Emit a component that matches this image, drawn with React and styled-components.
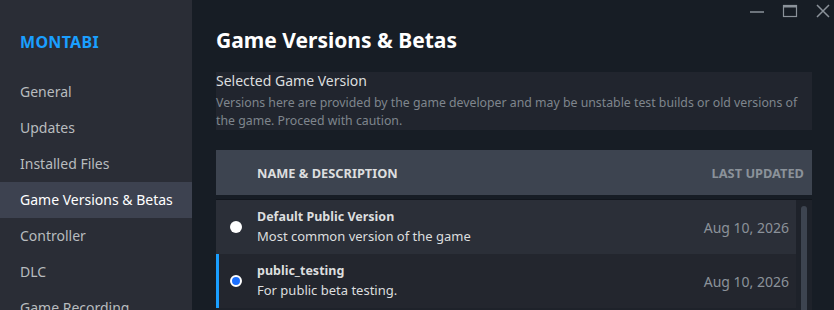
import React from 'react'
import styled, { createGlobalStyle } from 'styled-components'

const GlobalStyle = createGlobalStyle`
  html, body {
    margin: 0;
    padding: 0;
    background: #171d25;
    font-family: "Noto Sans", "Open Sans", Arial, sans-serif;
    overflow: hidden;
  }
`

const Window = styled.div`
  display: flex;
  width: 834px;
  height: 310px;
  overflow: hidden;
`
const Sidebar = styled.div`
  width: 192px;
  flex-shrink: 0;
  background: #2a2d36;
  padding-top: 30px;
  box-sizing: border-box;
`
const AppName = styled.div`
  padding-left: 20px;
  font-size: 16px;
  font-weight: 700;
  color: #1a9fff;
  letter-spacing: 0.3px;
  height: 24px;
  line-height: 24px;
  margin-bottom: 20px;
`
const NavItem = styled.div`
  height: 36px;
  line-height: 36px;
  padding-left: 20px;
  font-size: 14px;
  color: ${(p) => (p.active ? '#ffffff' : '#b8bcbf')};
  background: ${(p) => (p.active ? '#3d4250' : 'transparent')};
`
const Main = styled.div`
  flex: 1;
  position: relative;
  padding: 25px 22px 0 24px;
`
const Controls = styled.div`
  position: absolute;
  top: 1px;
  right: 0;
  display: flex;
  gap: 11px;
`
const Ctrl = styled.svg`
  width: 22px;
  height: 20px;
  color: #8b929a;
`
const Title = styled.h1`
  margin: 0 0 17px;
  font-size: 21px;
  font-weight: 700;
  color: #ffffff;
  line-height: 30px;
`
const Section = styled.div`
  background: #21252e;
  margin-bottom: 20px;
`
const SectionTitle = styled.div`
  font-size: 14px;
  color: #dcdedf;
  line-height: 18px;
`
const SectionText = styled.div`
  font-size: 12.3px;
  color: #7f858d;
  line-height: 18px;
  margin-top: 4px;
`
const Header = styled.div`
  display: flex;
  align-items: center;
  justify-content: space-between;
  height: 45px;
  background: #3d4450;
  padding: 0 8px 0 41px;
  font-size: 12.8px;
  font-weight: 700;
`
const HeadCell = styled.span`
  color: ${(p) => (p.dim ? '#8b929a' : '#dcdedf')};
`
const List = styled.div`
  display: flex;
  margin-top: 4px;
  background: #1e222a;
  border-top: 1px solid #12161d;
`
const Rows = styled.div`
  flex: 1;
`
const Row = styled.div`
  display: flex;
  align-items: center;
  height: 54px;
  padding: 0 7px 0 11px;
  background: ${(p) => (p.selected ? '#23262e' : '#2b2f38')};
  border-left: 3px solid ${(p) => (p.selected ? '#1a9fff' : 'transparent')};
`
const Radio = styled.span`
  width: 12px;
  height: 12px;
  border-radius: 50%;
  box-sizing: border-box;
  background: ${(p) => (p.checked ? '#1a6fff' : '#ffffff')};
  border: ${(p) => (p.checked ? '2px solid #ffffff' : 'none')};
  margin-right: 15px;
  flex-shrink: 0;
`
const Info = styled.div`
  flex: 1;
`
const Name = styled.div`
  font-size: 12.5px;
  font-weight: 700;
  color: #dcdedf;
  line-height: 18px;
`
const Desc = styled.div`
  font-size: 13px;
  color: #dcdedf;
  line-height: 20px;
`
const Date = styled.div`
  font-size: 14px;
  color: #8b929a;
`
const Scroll = styled.div`
  width: 16px;
  display: flex;
  justify-content: center;
  padding-top: 6px;
`
const Thumb = styled.div`
  width: 6px;
  height: 200px;
  border-radius: 3px;
  background: #3d4450;
`

const nav = [
  'General',
  'Updates',
  'Installed Files',
  'Game Versions & Betas',
  'Controller',
  'DLC',
  'Game Recording',
]

const versions = [
  { name: 'Default Public Version', desc: 'Most common version of the game', date: 'Aug 10, 2026' },
  { name: 'public_testing', desc: 'For public beta testing.', date: 'Aug 10, 2026', selected: true },
]

export default function App() {
  return (
    <Window>
      <GlobalStyle />
      <Sidebar>
        <AppName>MONTABI</AppName>
        {nav.map((n) => (
          <NavItem key={n} active={n === 'Game Versions & Betas'}>
            {n}
          </NavItem>
        ))}
      </Sidebar>
      <Main>
        <Controls>
          <Ctrl viewBox="0 0 22 20">
            <line x1="4" y1="11" x2="18" y2="11" stroke="currentColor" strokeWidth="1.5" />
          </Ctrl>
          <Ctrl viewBox="0 0 22 20">
            <rect x="4.5" y="4.5" width="13" height="11" fill="none" stroke="currentColor" strokeWidth="1.2" />
            <line x1="4.5" y1="5.5" x2="17.5" y2="5.5" stroke="currentColor" strokeWidth="2" />
          </Ctrl>
          <Ctrl viewBox="0 0 22 20">
            <path d="M5 4 L17 16 M17 4 L5 16" stroke="currentColor" strokeWidth="1.5" />
          </Ctrl>
        </Controls>
        <Title>Game Versions &amp; Betas</Title>
        <Section>
          <SectionTitle>Selected Game Version</SectionTitle>
          <SectionText>
            Versions here are provided by the game developer and may be unstable test builds or old versions of the
            game. Proceed with caution.
          </SectionText>
        </Section>
        <Header>
          <HeadCell>NAME &amp; DESCRIPTION</HeadCell>
          <HeadCell dim>LAST UPDATED</HeadCell>
        </Header>
        <List>
          <Rows>
            {versions.map((v) => (
              <Row key={v.name} selected={v.selected}>
                <Radio checked={v.selected} />
                <Info>
                  <Name>{v.name}</Name>
                  <Desc>{v.desc}</Desc>
                </Info>
                <Date>{v.date}</Date>
              </Row>
            ))}
          </Rows>
          <Scroll>
            <Thumb />
          </Scroll>
        </List>
      </Main>
    </Window>
  )
}
